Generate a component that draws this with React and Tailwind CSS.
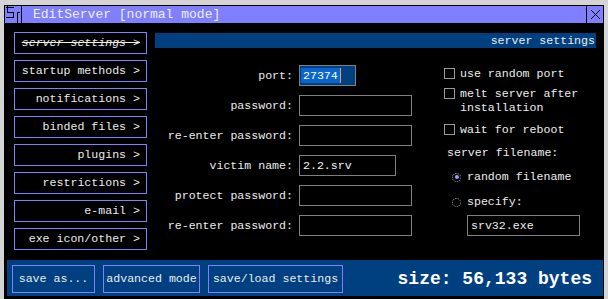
import React from 'react';

const navItems = [
  'startup methods >',
  'notifications >',
  'binded files >',
  'plugins >',
  'restrictions >',
  'e-mail >',
  'exe icon/other >',
];

const FieldRow = ({ label, width, value }) => (
  <>
    <div className="h-[21px] flex items-center justify-end whitespace-pre">{label}</div>
    <div className="h-[21px] flex items-center">
      <div
        className="h-[21px] border border-[#808080] bg-black flex items-center pl-[3px] text-[#f4f4f4]"
        style={{ width }}
      >
        {value}
      </div>
    </div>
  </>
);

const Checkbox = ({ children, className = '' }) => (
  <div className={`flex items-start gap-[5px] ${className}`}>
    <span className="mt-[1px] w-[11px] h-[11px] border border-[#9a9a9a] shrink-0" />
    <span className="leading-[14px]">{children}</span>
  </div>
);

const Radio = ({ checked, children, className = '' }) => (
  <div className={`flex items-center gap-[6px] ml-[8px] h-[14px] ${className}`}>
    <span className="w-[9px] h-[9px] rounded-full border border-dotted border-[#a0a0a0] flex items-center justify-center shrink-0">
      {checked && <span className="w-[4px] h-[4px] rounded-full bg-[#9a9aff]" />}
    </span>
    <span>{children}</span>
  </div>
);

const App = () => {
  return (
    <div
      className="w-[608px] h-[299px] bg-[#d4d4d4] overflow-hidden pt-[5px] pl-[4px] text-[11.6px] text-[#ececec]"
      style={{ fontFamily: '"Liberation Mono", "Courier New", monospace' }}
    >
      <div className="w-[600px] h-[294px] border border-black bg-black flex flex-col">
        {/* Title bar */}
        <div className="h-[17px] bg-[#8080ff] flex items-center shrink-0">
          <svg width="17" height="17" viewBox="0 0 17 17" className="shrink-0">
            <g stroke="#000" strokeWidth="1" fill="none" shapeRendering="crispEdges">
              <path d="M2.5 0 V6.5 H8.5 V11.5 H1 M8.5 1.5 H1" />
              <path d="M12.5 17 V6.5 H15" />
              <path d="M16.5 0 V17" />
            </g>
          </svg>
          <span className="ml-[11px] text-[13px] text-[#eeeeff] leading-none">EditServer [normal mode]</span>
          <div className="ml-auto w-[17px] h-[17px] border-l border-black flex items-center justify-center">
            <svg width="11" height="11" viewBox="0 0 11 11">
              <path d="M1 1 L10 10 M10 1 L1 10" stroke="#000" strokeWidth="1" />
            </svg>
          </div>
        </div>

        {/* Body */}
        <div className="flex-1 flex flex-col">
          <div className="flex pl-[9px] pt-[9px] gap-[8px]">
            {/* Nav */}
            <div className="w-[133px] flex flex-col gap-[6px]">
              <div className="h-[22px] border border-[#8080ff] flex items-center justify-end pr-[6px] italic line-through whitespace-pre">
                server settings &gt;
              </div>
              {navItems.map((item) => (
                <div
                  key={item}
                  className="h-[22px] border border-[#8080ff] flex items-center justify-end pr-[6px] whitespace-pre"
                >
                  {item}
                </div>
              ))}
            </div>

            {/* Content */}
            <div className="w-[441px] mt-[1px]">
              <div className="h-[15px] bg-[#004080] flex items-center justify-end pr-[1px] leading-none">
                server settings
              </div>

              <div className="flex mt-[17px]">
                <div className="grid grid-cols-[138px_auto] gap-x-[6px] gap-y-[9px]">
                  <div className="h-[21px] flex items-center justify-end">port:</div>
                  <div className="h-[21px] flex items-center">
                    <div className="w-[57px] h-[21px] border border-[#808080] bg-[#004080] flex items-center pl-[1px]">
                      <span className="bg-[#0a66cc] text-white leading-[15px] px-[2px]">27374</span>
                      <span className="w-[1px] h-[15px] bg-[#e0a060]" />
                    </div>
                  </div>
                  <FieldRow label="password:" width={113} />
                  <FieldRow label="re-enter password:" width={113} />
                  <FieldRow label="victim name:" width={97} value="2.2.srv" />
                  <FieldRow label="protect password:" width={113} />
                  <FieldRow label="re-enter password:" width={113} />
                </div>

                {/* Right column */}
                <div className="ml-[32px] flex flex-col">
                  <Checkbox className="mt-[2px]">use random port</Checkbox>
                  <Checkbox className="mt-[6px]">
                    melt server after
                    <br />
                    installation
                  </Checkbox>
                  <Checkbox className="mt-[8px]">wait for reboot</Checkbox>
                  <div className="mt-[9px] ml-[3px] leading-[14px]">server filename:</div>
                  <Radio checked className="mt-[10px]">random filename</Radio>
                  <Radio className="mt-[11px]">specify:</Radio>
                  <div className="mt-[6px] ml-[23px] w-[113px] h-[21px] border border-[#808080] flex items-center pl-[3px]">
                    srv32.exe
                  </div>
                </div>
              </div>
            </div>
          </div>

          {/* Bottom bar */}
          <div className="mt-auto ml-[2px] mb-[2px] h-[36px] bg-[#004080] flex items-start pt-[5px] pl-[5px] pr-[11px] gap-[8px]">
            <div className="w-[83px] h-[28px] border border-[#8080ff] flex items-center justify-center">save as...</div>
            <div className="w-[97px] h-[28px] border border-[#8080ff] flex items-center justify-center">advanced mode</div>
            <div className="w-[135px] h-[28px] border border-[#8080ff] flex items-center justify-center">save/load settings</div>
            <div className="ml-auto h-[28px] flex items-center text-[18px] font-bold text-white whitespace-pre">
              size: 56,133 bytes
            </div>
          </div>
        </div>
      </div>
    </div>
  );
};

export default App;
